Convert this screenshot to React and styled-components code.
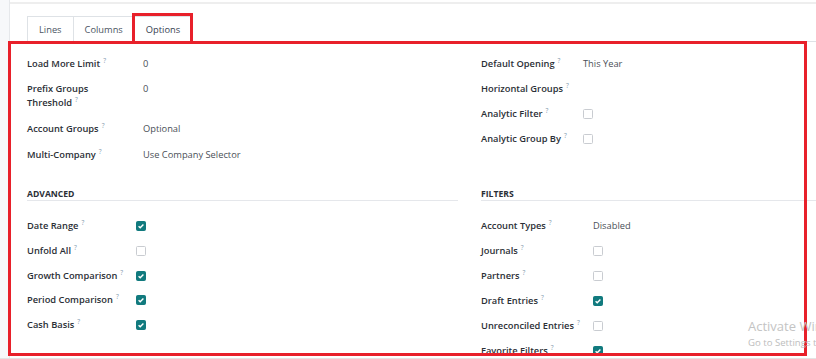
import React from 'react';
import styled, { createGlobalStyle } from 'styled-components';

const GlobalStyle = createGlobalStyle`
  body {
    margin: 0;
    background: #ffffff;
    font-family: "Open Sans", "Noto Sans", sans-serif;
  }
`;

const generalLeft = [
  { label: 'Load More Limit', value: '0' },
  { label: 'Prefix Groups Threshold', value: '0', wrap: true },
  { label: 'Account Groups', value: 'Optional' },
  { label: 'Multi-Company', value: 'Use Company Selector' },
];

const generalRight = [
  { label: 'Default Opening', value: 'This Year' },
  { label: 'Horizontal Groups', value: '' },
  { label: 'Analytic Filter', check: false },
  { label: 'Analytic Group By', check: false },
];

const advanced = [
  { label: 'Date Range', check: true },
  { label: 'Unfold All', check: false },
  { label: 'Growth Comparison', check: true },
  { label: 'Period Comparison', check: true },
  { label: 'Cash Basis', check: true },
];

const filters = [
  { label: 'Account Types', value: 'Disabled' },
  { label: 'Journals', check: false },
  { label: 'Partners', check: false },
  { label: 'Draft Entries', check: true },
  { label: 'Unreconciled Entries', check: false },
  { label: 'Favorite Filters', check: true },
];

function Checkbox({ checked }) {
  return (
    <Box $checked={checked}>
      {checked && (
        <svg width="8" height="8" viewBox="0 0 8 8">
          <path d="M1.6 4.2 L3.2 5.7 L6.4 2.4" fill="none" stroke="#fff" strokeWidth="1.4" />
        </svg>
      )}
    </Box>
  );
}

function Field({ item, labelWidth, textPad, rowH }) {
  return (
    <Row $pad={(rowH - 14) / 2}>
      <Label $w={labelWidth} $wrap={item.wrap}>
        <span>
          {item.label}
          <Help>?</Help>
        </span>
      </Label>
      <Value $pad={textPad}>
        {item.check !== undefined ? <Checkbox checked={item.check} /> : item.value}
      </Value>
    </Row>
  );
}

function Group({ title, items, labelWidth, textPad, rowH }) {
  return (
    <GroupBox $section={!!title}>
      {title && <Heading>{title}</Heading>}
      {title && <Spacer />}
      {items.map(item => (
        <Field key={item.label} item={item} labelWidth={labelWidth} textPad={textPad} rowH={rowH} />
      ))}
    </GroupBox>
  );
}

export default function App() {
  return (
    <Screen>
      <GlobalStyle />
      <Rail />
      <Sheet>
        <TabBar>
          <Tab>Lines</Tab>
          <Tab>Columns</Tab>
          <Tab $active>Options</Tab>
        </TabBar>
        <FormGrid>
          <Group items={generalLeft} labelWidth={109} textPad={7} rowH={25.6} />
          <Group items={generalRight} labelWidth={102} textPad={0} rowH={25.3} />
          <Group title="Advanced" items={advanced} labelWidth={109} textPad={0} rowH={24.9} />
          <Group title="Filters" items={filters} labelWidth={111} textPad={1} rowH={25} />
        </FormGrid>
      </Sheet>
      <Mark $x={8} $y={41} $w={799} $h={315} />
      <Mark $x={132} $y={13} $w={61} $h={31} />
      <Watermark>
        <big>Activate Windows</big>
        <small>Go to Settings to activate Windows.</small>
      </Watermark>
    </Screen>
  );
}

const Screen = styled.div`
  position: relative;
  width: 816px;
  height: 358px;
  display: flex;
  overflow: hidden;
  border-bottom: 1px solid #e4e4e4;
`;

const Rail = styled.div`
  width: 9px;
  flex: none;
  background: #f7f8fa;
  border-right: 1px solid #e6e8eb;
`;

const Sheet = styled.div`
  flex: 1;
  min-width: 0;
  margin-top: 2px;
  border-top: 2px solid #eeeeee;
`;

const TabBar = styled.div`
  display: flex;
  padding: 12px 0 0 17px;
  border-bottom: 1px solid #dee2e6;
`;

const Tab = styled.div`
  height: 24px;
  padding: 0 11px;
  margin-right: -1px;
  margin-bottom: -1px;
  display: flex;
  align-items: center;
  font-size: 9.3px;
  color: ${p => (p.$active ? '#374151' : '#4b5563')};
  border: 1px solid #dee2e6;
  border-bottom-color: ${p => (p.$active ? '#ffffff' : '#dee2e6')};
  background: #ffffff;
`;

const FormGrid = styled.div`
  display: grid;
  grid-template-columns: 431px 431px;
  column-gap: 23px;
  padding: 9px 0 0 17px;
`;

const GroupBox = styled.div`
  margin-top: ${p => (p.$section ? '21px' : '0')};
`;

const Heading = styled.div`
  font-size: 8.6px;
  font-weight: 700;
  line-height: 12px;
  text-transform: uppercase;
  color: #2b2f36;
  border-bottom: 1px solid #e5e7eb;
`;

const Spacer = styled.div`
  height: 12px;
`;

const Row = styled.div`
  display: flex;
  align-items: flex-start;
  padding: ${p => p.$pad}px 0;
`;

const Label = styled.div`
  width: ${p => p.$w}px;
  flex: none;
  font-size: 9.3px;
  font-weight: 600;
  line-height: 14px;
  color: #2b2f36;
  white-space: ${p => (p.$wrap ? 'normal' : 'nowrap')};

  span {
    display: inline-block;
    max-width: ${p => (p.$wrap ? '80px' : 'none')};
  }
`;

const Help = styled.sup`
  font-size: 6.5px;
  font-weight: 400;
  margin-left: 3px;
  color: #7d97aa;
  vertical-align: 4px;
  line-height: 0;
`;

const Value = styled.div`
  padding-left: ${p => p.$pad}px;
  height: 14px;
  font-size: 9.3px;
  line-height: 14px;
  color: #4a4f57;
  display: flex;
  align-items: center;
  white-space: nowrap;
`;

const Box = styled.span`
  width: 10px;
  height: 10px;
  box-sizing: border-box;
  border-radius: 1.5px;
  display: inline-flex;
  align-items: center;
  justify-content: center;
  background: ${p => (p.$checked ? '#117a7e' : '#ffffff')};
  border: 1px solid ${p => (p.$checked ? '#117a7e' : '#c9ccd1')};
`;

const Mark = styled.div`
  position: absolute;
  left: ${p => p.$x}px;
  top: ${p => p.$y}px;
  width: ${p => p.$w}px;
  height: ${p => p.$h}px;
  box-sizing: border-box;
  border: 3px solid #e8202a;
  pointer-events: none;
`;

const Watermark = styled.div`
  position: absolute;
  left: 748px;
  top: 317px;
  display: flex;
  flex-direction: column;
  white-space: nowrap;
  color: #c4c4c4;

  big {
    font-size: 13px;
    line-height: 18px;
  }

  small {
    font-size: 9.6px;
    line-height: 15px;
    color: #bdbdbd;
  }
`;
